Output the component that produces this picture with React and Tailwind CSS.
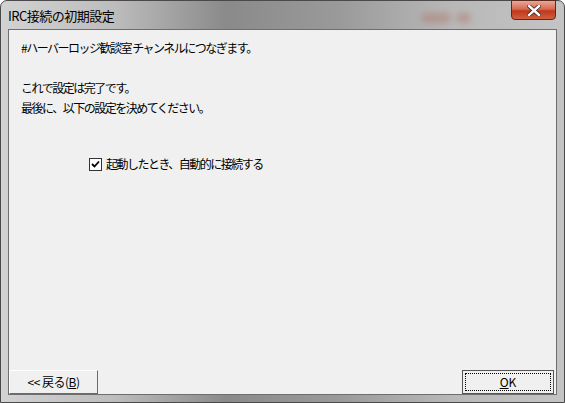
import React from 'react';

const jp = { fontFamily: '"Noto Sans CJK JP", "Noto Sans", sans-serif' };

const App = () => {
  return (
    <div className="w-[565px] h-[403px] bg-white overflow-hidden" style={jp}>
      {/* window frame */}
      <div className="relative w-full h-full rounded-t-[7px] border border-[#4a4a4a] bg-[linear-gradient(90deg,#d2d2d2_0%,#bdbdbd_20%,#8a8a8a_40%,#9a9a9a_60%,#b8b8b8_80%,#c4c4c4_100%)] flex flex-col">
        {/* title bar */}
        <div className="relative h-[28px] flex items-center pl-[7px]">
          <span className="text-[13px] text-black leading-none tracking-[-0.5px]">IRC接続の初期設定</span>
          <div className="absolute left-[420px] top-[12px] w-[30px] h-[10px] rounded-full bg-[#b06a5a] opacity-40 blur-[3px]" />
          <div className="absolute left-[455px] top-[12px] w-[15px] h-[10px] rounded-full bg-[#b06a5a] opacity-40 blur-[3px]" />
          <div className="absolute right-[8px] top-[-1px] w-[45px] h-[20px] rounded-b-[4px] border border-[#5a2a20] bg-[linear-gradient(180deg,#e8a898_0%,#d86a50_45%,#c0381c_55%,#d06040_100%)] flex items-center justify-center">
            <svg width="14" height="11" viewBox="0 0 14 11">
              <path d="M2 1 L12 10 M12 1 L2 10" stroke="#3a2a28" strokeWidth="4" strokeLinecap="square" />
              <path d="M2 1 L12 10 M12 1 L2 10" stroke="#ffffff" strokeWidth="2.4" strokeLinecap="square" />
            </svg>
          </div>
        </div>
        {/* client area */}
        <div className="mx-[7px] mb-[7px] flex-1 border border-[#6e6e6e] bg-[#f0f0f0] flex flex-col">
          <div className="flex-1 pl-[12px] pt-[8px] text-[12px] text-black leading-[20px] tracking-[-1.5px]">
            <p>#ハーバーロッジ歓談室 チャンネルにつなぎます。</p>
            <p className="mt-[20px]">これで設定は完了です。</p>
            <p>最後に、以下の設定を決めてください。</p>
            <label className="mt-[36px] ml-[68px] flex items-center gap-[4px]">
              <span className="w-[13px] h-[13px] border border-[#333] bg-white flex items-center justify-center">
                <svg width="9" height="9" viewBox="0 0 9 9">
                  <path d="M1 4 L3.5 6.5 L8 1.5" stroke="#000" strokeWidth="1.8" fill="none" />
                </svg>
              </span>
              <span>起動したとき、自動的に接続する</span>
            </label>
          </div>
          <div className="flex justify-between items-end">
            <button className="w-[89px] h-[24px] bg-[#f0f0f0] border-t border-l border-white border-r border-b border-r-[#6a6a6a] border-b-[#6a6a6a] text-[12px] text-black tracking-[-0.5px]">
              &lt;&lt; 戻る(<span className="underline">B</span>)
            </button>
            <button className="w-[92px] h-[24px] bg-[#f0f0f0] border border-[#555] p-[2px] text-[12px] text-black mr-[2px]">
              <span className="block w-full h-full border border-dotted border-black leading-[16px]">
                <span className="underline">O</span>K
              </span>
            </button>
          </div>
        </div>
      </div>
    </div>
  );
};

export default App;
